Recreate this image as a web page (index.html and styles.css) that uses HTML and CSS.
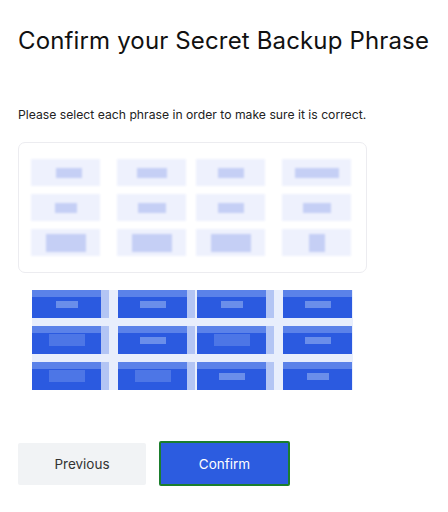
FILE: index.html
```html
<!DOCTYPE html>
<html>
<head>
    <title>Confirm Secret Backup Phrase</title>
    <link rel="stylesheet" href="styles.css">
</head>
<body>
    <div class="page">
        <h1 class="title">Confirm your Secret Backup Phrase</h1>
        <p class="subtitle">Please select each phrase in order to make sure it is correct.</p>

        <!-- selected words go here, blurred out -->
        <div class="drop-box">
            <div class="pill"><span class="word w1"></span></div>
            <div class="pill"><span class="word w2"></span></div>
            <div class="pill"><span class="word w3"></span></div>
            <div class="pill"><span class="word w4"></span></div>
            <div class="pill"><span class="word w5"></span></div>
            <div class="pill"><span class="word w6"></span></div>
            <div class="pill"><span class="word w3"></span></div>
            <div class="pill"><span class="word w6"></span></div>
            <div class="pill"><span class="word w7"></span></div>
            <div class="pill"><span class="word w7"></span></div>
            <div class="pill"><span class="word w7"></span></div>
            <div class="pill"><span class="word w8"></span></div>
        </div>

        <!-- word choices, also blurred -->
        <div class="choices">
            <div class="chip"><span class="mark m1"></span></div>
            <div class="chip"><span class="mark m2"></span></div>
            <div class="chip"><span class="mark m1"></span></div>
            <div class="chip"><span class="mark m2"></span></div>
            <div class="chip"><span class="mark m3"></span></div>
            <div class="chip"><span class="mark m2"></span></div>
            <div class="chip"><span class="mark m3"></span></div>
            <div class="chip"><span class="mark m2"></span></div>
            <div class="chip"><span class="mark m3"></span></div>
            <div class="chip"><span class="mark m3"></span></div>
            <div class="chip"><span class="mark m2"></span></div>
            <div class="chip"><span class="mark m1"></span></div>
        </div>

        <div class="actions">
            <button class="btn btn-secondary">Previous</button>
            <button class="btn btn-primary">Confirm</button>
        </div>
    </div>
</body>
</html>
```

FILE: styles.css
```css
body {
    margin: 0;
    padding: 0;
    background-color: #ffffff;
    color: #1a1a1a;
    font-family: Inter, "Open Sans", sans-serif;
}

.page {
    padding: 26px 18px 0 18px;
}

.title {
    margin: 0;
    font-size: 24px;
    font-weight: 400;
    letter-spacing: 0.15px;
    line-height: 30px;
    color: #111;
}

.subtitle {
    margin: 51px 0 0 0;
    font-size: 12.2px;
    line-height: 16px;
    color: #222;
}

.drop-box {
    margin-top: 19px;
    width: 349px;
    height: 131px;
    box-sizing: border-box;
    border: 1px solid #ececf0;
    border-radius: 7px;
    padding: 16px 0 0 12px;
    display: flex;
    flex-wrap: wrap;
    align-content: flex-start;
    row-gap: 8px;
}

.pill {
    width: 69px;
    height: 27px;
    margin-right: 17px;
    background-color: #eef1fd;
    display: flex;
    align-items: center;
    justify-content: center;
    filter: blur(1px);
}

.pill:nth-child(4n+2) {
    margin-right: 10px;
}

.pill:nth-child(4n) {
    margin-right: 0;
}

.word {
    display: block;
    height: 10px;
    background-color: #c5cff5;
}

.w1 { width: 26px; margin-left: 6px; }
.w2 { width: 30px; }
.w3 { width: 26px; }
.w4 { width: 44px; }
.w5 { width: 22px; }
.w6 { width: 28px; }
.w7 { width: 40px; height: 18px; }
.w8 { width: 16px; height: 18px; }

.choices {
    margin: 17px 0 0 14px;
    width: 321px;
    display: flex;
    flex-wrap: wrap;
    row-gap: 8px;
    background-color: #e8eefc;
}

.chip {
    width: 69px;
    height: 28px;
    margin-right: 17px;
    background: linear-gradient(180deg, #5b82e9 0, #5b82e9 25%, #2b5ae0 25%, #2b5ae0 100%);
    display: flex;
    align-items: center;
    justify-content: center;
    box-shadow: 8px 0 0 0 #b3c5f4;
}

.chip:nth-child(4n+2) {
    margin-right: 10px;
}

.chip:nth-child(4n) {
    margin-right: 0;
    box-shadow: none;
}

.mark {
    display: block;
    height: 7px;
    background-color: #6a8eea;
}

.m1 { width: 22px; }
.m2 { width: 26px; }
.m3 { width: 36px; height: 12px; background-color: #4d76e6; }

.actions {
    margin-top: 51px;
    display: flex;
    align-items: center;
    gap: 13px;
}

.btn {
    font-family: Inter, "Open Sans", sans-serif;
    font-size: 13.5px;
    cursor: pointer;
    border-radius: 2px;
}

.btn-secondary {
    width: 128px;
    height: 42px;
    border: none;
    background-color: #f1f3f5;
    color: #333;
}

.btn-primary {
    width: 131px;
    height: 45px;
    border: 2px solid #1b7e2d;
    background-color: #2c5ce0;
    color: #ffffff;
}
```
